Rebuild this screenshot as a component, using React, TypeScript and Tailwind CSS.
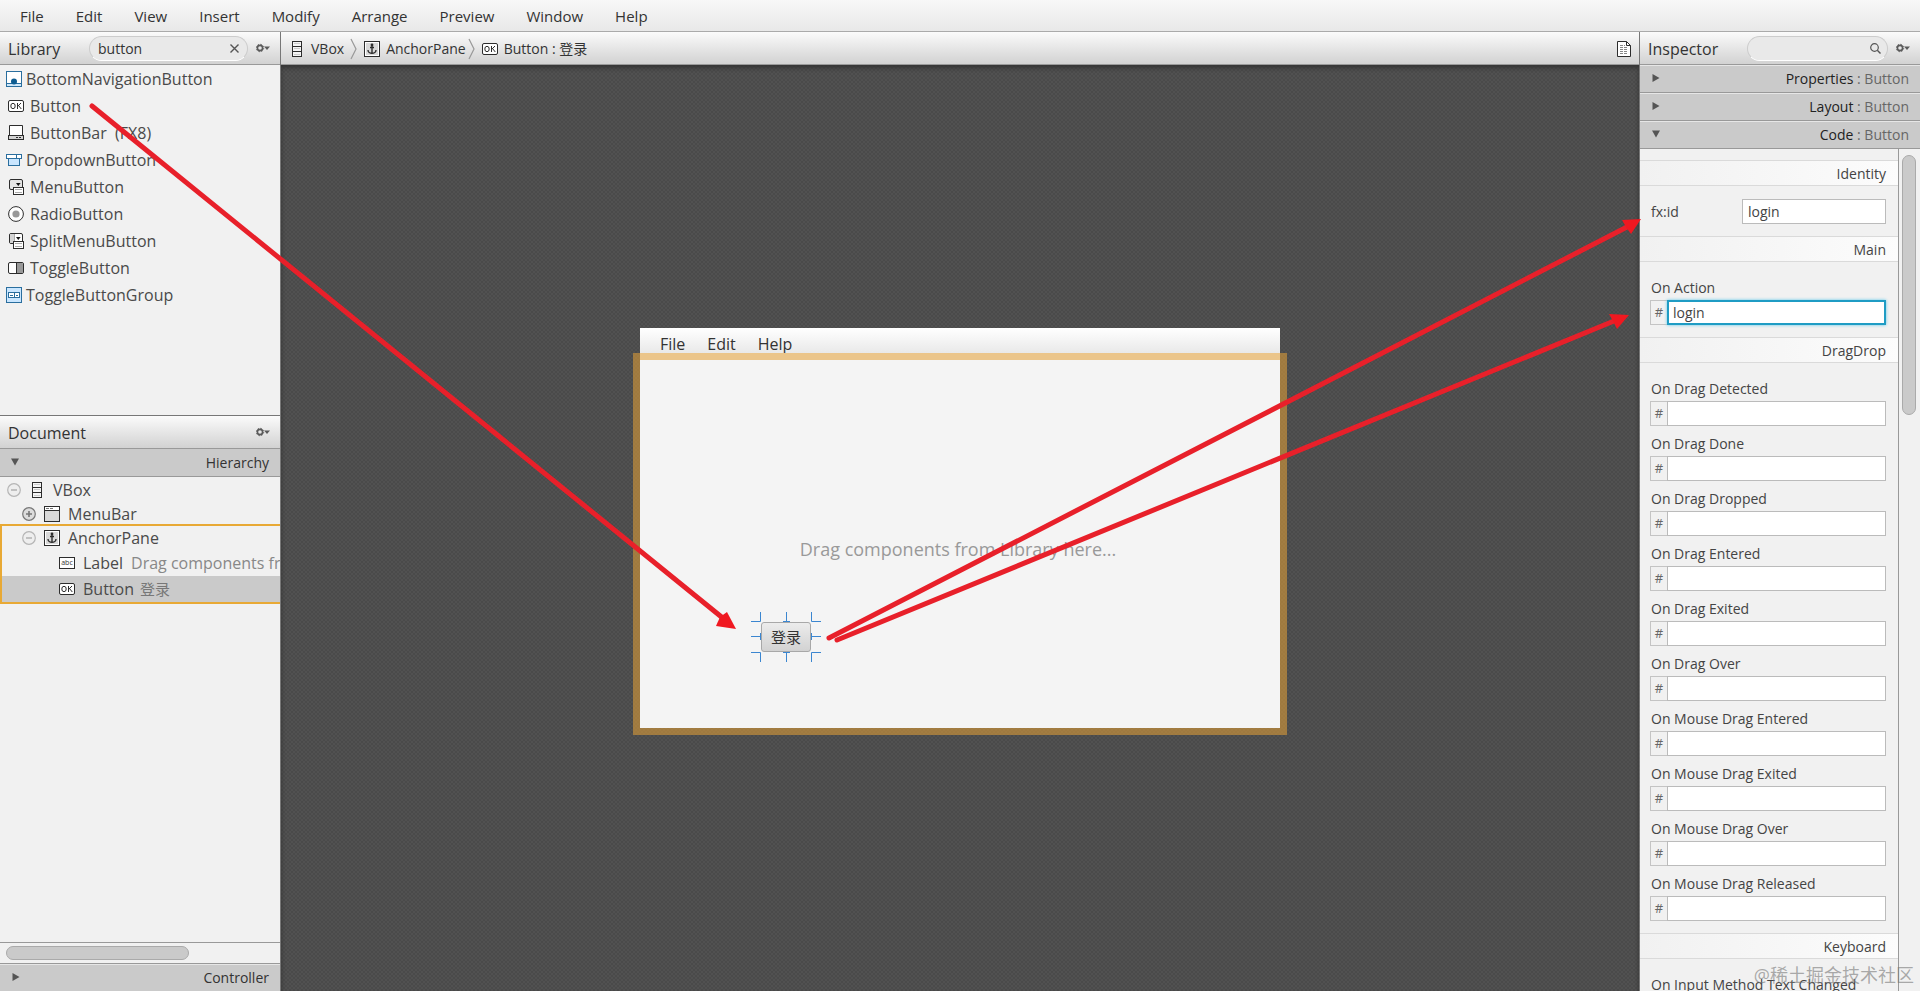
import React, { FC, ReactNode } from "react";

type IconProps = { className?: string };

const OkIcon: FC<IconProps> = ({ className = "" }) => (
  <svg width="16" height="12" viewBox="0 0 16 12" className={`shrink-0 ${className}`}>
    <rect x="0.5" y="0.5" width="15" height="11" rx="1.5" fill="#fff" stroke="#2d2d2d" />
    <ellipse cx="5" cy="6" rx="2.2" ry="2.7" fill="none" stroke="#2d2d2d" />
    <path d="M9.5 3v6M13 3L9.7 6.4M10.6 5.6L13.3 9" fill="none" stroke="#2d2d2d" />
  </svg>
);

const AbcIcon: FC = () => (
  <svg width="16" height="12" viewBox="0 0 16 12" className="shrink-0">
    <rect x="0.5" y="0.5" width="15" height="11" fill="#fff" stroke="#2d2d2d" />
    <text x="8" y="8" fontSize="7" textAnchor="middle" fill="#333" fontFamily="Open Sans">
      abc
    </text>
  </svg>
);

const VBoxIcon: FC = () => (
  <svg width="10" height="16" viewBox="0 0 10 16" className="shrink-0">
    <rect x="0.5" y="0.5" width="9" height="15" fill="#f4f4f4" stroke="#2d2d2d" />
    <path d="M2 2.5h6M2 7.5h6M2 13.5h6" stroke="#ccc" />
    <path d="M0 5.5h10M0 10.5h10" stroke="#2d2d2d" />
  </svg>
);

const AnchorIcon: FC = () => (
  <svg width="16" height="16" viewBox="0 0 16 16" className="shrink-0">
    <rect x="0.5" y="0.5" width="15" height="15" fill="#fff" stroke="#2d2d2d" />
    <rect x="2" y="2" width="12" height="12" fill="#d9d9d9" />
    <path d="M8 4v8M6 6.5h4M4 9c0 2 2 3.3 4 3.3S12 11 12 9" fill="none" stroke="#2d2d2d" strokeWidth="1.4" />
    <circle cx="8" cy="4" r="1.4" fill="#2d2d2d" />
  </svg>
);

const MenuBarIcon: FC = () => (
  <svg width="16" height="16" viewBox="0 0 16 16" className="shrink-0">
    <rect x="0.5" y="0.5" width="15" height="15" fill="#d9d9d9" stroke="#2d2d2d" />
    <rect x="1" y="1" width="14" height="3" fill="#fff" />
    <path d="M2 2.5h3M6 2.5h3" stroke="#777" />
    <path d="M0 4.5h16" stroke="#2d2d2d" />
  </svg>
);

const BottomNavIcon: FC = () => (
  <svg width="16" height="16" viewBox="0 0 16 16" className="shrink-0">
    <rect x="0.5" y="0.5" width="15" height="15" fill="#fff" stroke="#2a6e9e" />
    <rect x="1" y="12" width="14" height="3" fill="#cfe8fb" />
    <path d="M0 12.5h16" stroke="#2a6e9e" />
    <circle cx="8" cy="10.5" r="3" fill="#0d5c91" />
  </svg>
);

const ButtonBarIcon: FC = () => (
  <svg width="16" height="15" viewBox="0 0 16 15" className="shrink-0">
    <path d="M1.5 10V0.5h13V10" fill="#fff" stroke="#2d2d2d" />
    <rect x="0.5" y="10.5" width="15" height="4" fill="#d4d4d4" stroke="#2d2d2d" />
    <path d="M8 12.5h2M11 12.5h2" stroke="#2d2d2d" />
  </svg>
);

const DropdownIcon: FC = () => (
  <svg width="16" height="12" viewBox="0 0 16 12" className="shrink-0">
    <rect x="0.5" y="0.5" width="15" height="4" fill="#fff" stroke="#2a6e9e" />
    <path d="M10.5 1v3" stroke="#2a6e9e" />
    <rect x="2.5" y="4.5" width="11" height="7" fill="#c9e6ff" stroke="#2a6e9e" />
  </svg>
);

const MenuButtonIcon: FC<{ split?: boolean }> = ({ split }) => (
  <svg width="16" height="16" viewBox="0 0 16 16" className="shrink-0">
    <rect x="1.5" y="0.5" width="13" height="10" rx="1.5" fill={split ? "#fff" : "#e4e4e4"} stroke="#2d2d2d" />
    {split && <path d="M2 1h4v9H2z" fill="#d4d4d4" />}
    {split && <path d="M6.5 1v9" stroke="#aaa" />}
    <path d="M8 4h4.6L10.3 7z" fill="#111" />
    <rect x="5.5" y="8.5" width="10" height="7" fill="#fff" stroke="#2d2d2d" />
    <path d="M7 10.5h7M7 13.5h7" stroke="#aaa" />
  </svg>
);

const RadioIcon: FC = () => (
  <svg width="16" height="16" viewBox="0 0 16 16" className="shrink-0">
    <circle cx="8" cy="8" r="7.4" fill="#fff" stroke="#2d2d2d" />
    <circle cx="8" cy="8" r="3.6" fill="#999" />
  </svg>
);

const ToggleIcon: FC = () => (
  <svg width="16" height="12" viewBox="0 0 16 12" className="shrink-0">
    <rect x="0.5" y="0.5" width="15" height="11" rx="1.5" fill="#fff" stroke="#2d2d2d" />
    <path d="M8 1h6.5l0.5 0.5v9l-0.5 0.5H8z" fill="#999" />
    <path d="M8.5 0v12" stroke="#2d2d2d" />
  </svg>
);

const ToggleGroupIcon: FC = () => (
  <svg width="16" height="16" viewBox="0 0 16 16" className="shrink-0">
    <rect x="0.5" y="0.5" width="15" height="15" fill="#c9e6ff" stroke="#2a6e9e" />
    <rect x="2.5" y="5.5" width="11" height="5" fill="#fff" stroke="#2a6e9e" />
    <path d="M8.5 5v6M4 8.5h3M10 8.5h2" stroke="#2a6e9e" />
  </svg>
);

const GearButton: FC<{ label: string }> = ({ label }) => (
  <button type="button" aria-label={label} className="shrink-0">
    <svg width="14" height="10" viewBox="0 0 14 10">
      <circle cx="4" cy="5" r="2.6" fill="none" stroke="#5a5a5a" strokeWidth="1.6" />
      <circle cx="4" cy="5" r="3.7" fill="none" stroke="#5a5a5a" strokeDasharray="1.4 1.5" />
      <path d="M8 3.5h6L11 7z" fill="#5a5a5a" />
    </svg>
  </button>
);

const Triangle: FC<{ open?: boolean }> = ({ open }) => (
  <svg width="8" height="8" viewBox="0 0 8 8" className="mb-[2px] shrink-0">
    <path d={open ? "M0 0.5h8L4 7.5z" : "M0.5 0v8l7-4z"} fill="#555" />
  </svg>
);

const TreeToggle: FC<{ collapsed?: boolean }> = ({ collapsed }) => {
  const color = collapsed ? "#777" : "#b5b5b5";
  return (
    <button type="button" aria-label={collapsed ? "Expand" : "Collapse"} className="shrink-0">
      <svg width="14" height="14" viewBox="0 0 14 14" className="block">
        <circle cx="7" cy="7" r="6.3" fill={collapsed ? "#dcdcdc" : "#eee"} stroke={color} strokeWidth="1.2" />
        <path d={collapsed ? "M4 7h6M7 4v6" : "M4 7h6"} stroke={color} strokeWidth="1.6" />
      </svg>
    </button>
  );
};

const Separator: FC = () => (
  <svg width="8" height="22" viewBox="0 0 8 22" className="shrink-0">
    <path d="M1 1l5 10-5 10" fill="none" stroke="#999" strokeWidth="1.2" />
  </svg>
);

const menus = ["File", "Edit", "View", "Insert", "Modify", "Arrange", "Preview", "Window", "Help"];

const library: { name: string; icon: ReactNode; wide?: boolean }[] = [
  { name: "BottomNavigationButton", icon: <BottomNavIcon />, wide: true },
  { name: "Button", icon: <OkIcon /> },
  { name: "ButtonBar  (FX8)", icon: <ButtonBarIcon /> },
  { name: "DropdownButton", icon: <DropdownIcon />, wide: true },
  { name: "MenuButton", icon: <MenuButtonIcon /> },
  { name: "RadioButton", icon: <RadioIcon /> },
  { name: "SplitMenuButton", icon: <MenuButtonIcon split /> },
  { name: "ToggleButton", icon: <ToggleIcon /> },
  { name: "ToggleButtonGroup", icon: <ToggleGroupIcon />, wide: true },
];

const dragEvents = [
  "On Drag Detected",
  "On Drag Done",
  "On Drag Dropped",
  "On Drag Entered",
  "On Drag Exited",
  "On Drag Over",
  "On Mouse Drag Entered",
  "On Mouse Drag Exited",
  "On Mouse Drag Over",
  "On Mouse Drag Released",
];

const barStyle = "bg-linear-to-b from-[#fbfbfb] to-[#d2d2d2] border-b border-[#999]";

const SectionTitle: FC<{ children: ReactNode }> = ({ children }) => (
  <h3 className="flex h-[26px] shrink-0 items-center justify-end border-y border-[#dadada] bg-linear-to-r from-[#f1f1f1] to-[#fcfcfc] pt-px pr-3 text-[14px] text-[#444]">
    {children}
  </h3>
);

const EventField: FC<{ label: string; value?: string; focused?: boolean }> = ({ label, value = "", focused }) => {
  const id = label.toLowerCase().replace(/ /g, "-");
  return (
    <div className="h-[55px] pr-3 pl-[10px]">
      <label htmlFor={id} className="block h-[22px] pl-px text-[14px] leading-5 text-[#444]">
        {label}
      </label>
      <div className="flex h-[25px]">
        <span className="flex w-[17px] shrink-0 items-center justify-center border border-r-0 border-[#c4c4c4] text-[13px] text-[#666]">
          #
        </span>
        <input
          id={id}
          defaultValue={value}
          className={
            focused
              ? "min-w-0 flex-1 border-2 border-[#1f9cc4] bg-white px-1 text-[14px] text-[#444] shadow-[0_0_3px_#5cc8ea] outline-none"
              : "min-w-0 flex-1 border border-[#bbb] bg-white px-[5px] text-[14px] text-[#444] outline-none"
          }
        />
      </div>
    </div>
  );
};

const InspectorTab: FC<{ name: string; open?: boolean }> = ({ name, open }) => (
  <button
    type="button"
    className="flex h-7 w-full shrink-0 items-center justify-between border-t border-b border-t-[#e6e6e6] border-b-[#999] bg-[#cacaca] pr-[11px] pl-3 text-[14px] leading-5"
  >
    <Triangle open={open} />
    <span className="text-[#666]">
      <span className="text-[#222]">{name}</span> : Button
    </span>
  </button>
);

const LeftPanel: FC = () => (
  <aside className="flex w-[281px] shrink-0 flex-col border-r border-[#777] bg-[#f1f1f1]">
    <section className="flex h-[383px] flex-col">
      <div className={`flex h-[33px] shrink-0 items-center pr-[10px] pl-2 ${barStyle}`}>
        <h2 className="w-[81px] shrink-0 pt-[2px] text-[16px] text-[#333]">Library</h2>
        <div className="flex h-[25px] min-w-0 flex-1 items-center rounded-full border border-[#ccc] border-b-white bg-[#e9e9e9] px-2">
          <input
            aria-label="Search library"
            defaultValue="button"
            className="min-w-0 flex-1 bg-transparent text-[14px] text-[#333] outline-none"
          />
          <button type="button" aria-label="Clear search">
            <svg width="9" height="9" viewBox="0 0 9 9">
              <path d="M0.5 0.5l8 8M8.5 0.5l-8 8" stroke="#555" strokeWidth="1.4" />
            </svg>
          </button>
        </div>
        <div className="flex pl-2">
          <GearButton label="Library options" />
        </div>
      </div>
      <ul className="text-[16px] text-[#4a4a4a]">
        {library.map((item) => (
          <li
            key={item.name}
            className={
              item.wide
                ? "flex h-[27px] items-center gap-1 pl-[6px] whitespace-pre"
                : "flex h-[27px] items-center gap-[6px] pl-2 whitespace-pre"
            }
          >
            {item.icon}
            {item.name}
          </li>
        ))}
      </ul>
    </section>
    <section className="flex min-h-0 flex-1 flex-col">
      <div className={`flex h-[34px] shrink-0 items-center justify-between border-t border-t-[#777] pr-[10px] pl-2 ${barStyle}`}>
        <h2 className="pt-[2px] text-[16px] text-[#333]">Document</h2>
        <GearButton label="Document options" />
      </div>
      <button
        type="button"
        className="flex h-7 shrink-0 items-center justify-between border-b border-[#999] bg-[#cacaca] pr-[11px] pl-[11px] text-[14px] text-[#333]"
      >
        <Triangle open />
        Hierarchy
      </button>
      <div className="flex min-h-0 flex-1 flex-col overflow-hidden text-[16px] text-[#4a4a4a]">
        <div className="flex h-6 shrink-0 items-center pt-px pl-[7px]">
          <TreeToggle />
          <span className="flex w-8 justify-center">
            <VBoxIcon />
          </span>
          VBox
        </div>
        <div className="flex h-[23px] shrink-0 items-center gap-2 pt-[2px] pl-[22px]">
          <TreeToggle collapsed />
          <MenuBarIcon />
          MenuBar
        </div>
        <div className="shrink-0 border-2 border-r-0 border-[#e8a935]">
          <div className="flex h-6 items-center gap-2 pl-5">
            <TreeToggle />
            <AnchorIcon />
            AnchorPane
          </div>
          <div className="flex h-[26px] items-center gap-2 pl-[57px] whitespace-nowrap">
            <AbcIcon />
            Label <span className="text-[#888]">Drag components from Library here...</span>
          </div>
          <div className="flex h-[26px] items-center gap-[6px] bg-[#cacaca] pl-[57px]">
            <OkIcon className="mr-[2px]" />
            Button <span className="text-[15px] text-[#777]">登录</span>
          </div>
        </div>
      </div>
      <div className="flex h-[22px] shrink-0 items-center border-y border-[#999] px-[6px]">
        <div className="h-[14px] w-[183px] rounded-full border border-[#aaa] bg-[#cacaca]" />
      </div>
      <button
        type="button"
        className="flex h-[27px] shrink-0 items-center justify-between border-t border-[#e6e6e6] bg-[#cacaca] pr-[11px] pb-px pl-3 text-[14px] text-[#333]"
      >
        <Triangle />
        Controller
      </button>
    </section>
  </aside>
);

const handleRows = [
  "M0 9.5h9.5V0M35.5 0v9.5M32 9.5h7M60.5 0v9.5H70",
  "M0 24.5h9.5M9.5 21v7M60.5 21v7M60.5 24.5H70",
  "M0 40.5h9.5V50M35.5 50v-9.5M32 40.5h7M60.5 50v-9.5H70",
];

const Stage: FC = () => (
  <main className="flex min-w-0 flex-1 flex-col">
    <nav className={`flex h-[33px] shrink-0 items-center pt-px pr-1 pl-[11px] text-[14px] text-[#333] ${barStyle}`}>
      <VBoxIcon />
      <span className="pr-[6px] pl-[9px]">VBox</span>
      <Separator />
      <span className="pl-[6px]">
        <AnchorIcon />
      </span>
      <span className="pr-[2px] pl-[6px]">AnchorPane</span>
      <Separator />
      <OkIcon className="ml-[6px]" />
      <span className="pl-[6px]">Button : 登录</span>
      <button type="button" aria-label="Show source" className="ml-auto pr-1">
        <svg width="14" height="16" viewBox="0 0 14 16">
          <path d="M0.5 0.5h9l4 4v11H0.5z" fill="#fff" stroke="#2d2d2d" />
          <path d="M9.5 0.5v4h4" fill="none" stroke="#2d2d2d" />
          <path d="M3 4.5h5M3 6.5h8M3 8.5h7M3 10.5h8M3 12.5h7" stroke="#888" strokeDasharray="3 1" />
        </svg>
      </button>
    </nav>
    <div className="flex min-h-0 flex-1 items-center justify-center bg-[#4d4d4d] bg-[conic-gradient(#515151_25%,#4a4a4a_0_50%,#515151_0_75%,#4a4a4a_0)] bg-size-[4px_4px] shadow-[inset_0_3px_4px_#333]">
      <div className="flex h-[400px] w-[640px] flex-col">
        <div className="flex h-[25px] shrink-0 items-end gap-[22px] bg-linear-to-b from-white to-[#e9e9e9] pl-5 text-[16px] leading-[18px] text-[#333]">
          <span>File</span>
          <span>Edit</span>
          <span>Help</span>
        </div>
        <div className="relative flex-1 bg-[#f4f4f4]">
          <div className="absolute -inset-x-[7px] top-0 -bottom-[7px] border-[7px] border-[#e4a137]/56" />
          <p className="pt-[184px] pr-1 text-center text-[18px] leading-6 text-[#999]">
            Drag components from Library here...
          </p>
          <button
            type="button"
            className="absolute top-[269px] left-[121px] h-[30px] w-[50px] rounded-[3px] border border-[#a8a8a8] bg-linear-to-b from-[#ececec] to-[#d2d2d2] text-[15px] text-[#333]"
          >
            登录
          </button>
          <svg width="70" height="50" viewBox="0 0 70 50" className="absolute top-[259px] left-[111px]">
            {handleRows.map((d) => (
              <path key={d} d={d} fill="none" stroke="#3b86d0" />
            ))}
          </svg>
        </div>
      </div>
    </div>
  </main>
);

const Inspector: FC = () => (
  <aside className="flex w-[281px] shrink-0 flex-col border-l border-[#777] bg-[#f1f1f1]">
    <div className={`flex h-[33px] shrink-0 items-center pr-[10px] pl-2 ${barStyle}`}>
      <h2 className="w-[99px] shrink-0 pt-[2px] text-[16px] text-[#333]">Inspector</h2>
      <div className="flex h-[25px] min-w-0 flex-1 items-center rounded-full border border-[#ccc] border-b-white bg-[#e9e9e9] px-[6px]">
        <input aria-label="Search inspector" className="min-w-0 flex-1 bg-transparent text-[14px] outline-none" />
        <svg width="11" height="11" viewBox="0 0 11 11" className="shrink-0">
          <circle cx="4.5" cy="4.5" r="3.8" fill="none" stroke="#555" strokeWidth="1.2" />
          <path d="M7.3 7.3L10.5 10.5" stroke="#555" strokeWidth="1.4" />
        </svg>
      </div>
      <div className="flex pl-2">
        <GearButton label="Inspector options" />
      </div>
    </div>
    <InspectorTab name="Properties" />
    <InspectorTab name="Layout" />
    <InspectorTab name="Code" open />
    <div className="flex min-h-0 flex-1">
      <div className="min-w-0 flex-1 overflow-hidden">
        <div className="flex flex-col pt-[11px]">
          <SectionTitle>Identity</SectionTitle>
          <div className="flex h-[50px] items-center pr-3 pl-[11px]">
            <label htmlFor="fx-id" className="w-[91px] shrink-0 text-[14px] text-[#444]">
              fx:id
            </label>
            <input
              id="fx-id"
              defaultValue="login"
              className="h-[25px] min-w-0 flex-1 border border-[#bbb] bg-white px-[5px] text-[14px] text-[#444] outline-none"
            />
          </div>
          <SectionTitle>Main</SectionTitle>
          <div className="pt-4 pb-1">
            <EventField label="On Action" value="login" focused />
          </div>
          <SectionTitle>DragDrop</SectionTitle>
          <div className="pt-4 pb-1">
            {dragEvents.map((name) => (
              <EventField key={name} label={name} />
            ))}
          </div>
          <SectionTitle>Keyboard</SectionTitle>
          <div className="pt-4">
            <EventField label="On Input Method Text Changed" />
          </div>
        </div>
      </div>
      <div className="flex w-[22px] shrink-0 border-l border-[#999] pt-[6px] pl-[3px]">
        <div className="h-[260px] w-[14px] rounded-full border border-[#aaa] bg-[#cacaca]" />
      </div>
    </div>
  </aside>
);

const arrows = [
  { line: "M92 106L724 619", head: "M736 629L716 626L720 617L727 612Z" },
  { line: "M829 638L1627 227", head: "M1641 219L1631 234L1626 227L1622 220Z" },
  { line: "M837 640L1614 321", head: "M1629 315L1617 329L1613 321L1609 314Z" },
];

const App: FC = () => (
  <div className="relative flex h-screen flex-col overflow-hidden font-['Open_Sans','Noto_Sans_CJK_SC',sans-serif]">
    <header className="flex h-8 shrink-0 items-center gap-8 border-b border-[#aaa] bg-linear-to-b from-[#f8f8f8] to-[#e8e8e8] pt-px pl-5 text-[15px] text-[#333]">
      {menus.map((menu) => (
        <button key={menu} type="button">
          {menu}
        </button>
      ))}
    </header>
    <div className="flex min-h-0 flex-1">
      <LeftPanel />
      <Stage />
      <Inspector />
    </div>
    <svg
      viewBox="0 0 1920 991"
      preserveAspectRatio="none"
      className="pointer-events-none absolute inset-0 h-full w-full"
    >
      {arrows.map((arrow) => (
        <g key={arrow.line}>
          <path d={arrow.line} stroke="#e8202a" strokeWidth="5" strokeLinecap="round" />
          <path d={arrow.head} fill="#f01820" />
        </g>
      ))}
    </svg>
    <div className="pointer-events-none absolute right-[6px] bottom-1 text-[18px] leading-6 text-[#777]/60">
      @稀土掘金技术社区
    </div>
  </div>
);

export default App;
